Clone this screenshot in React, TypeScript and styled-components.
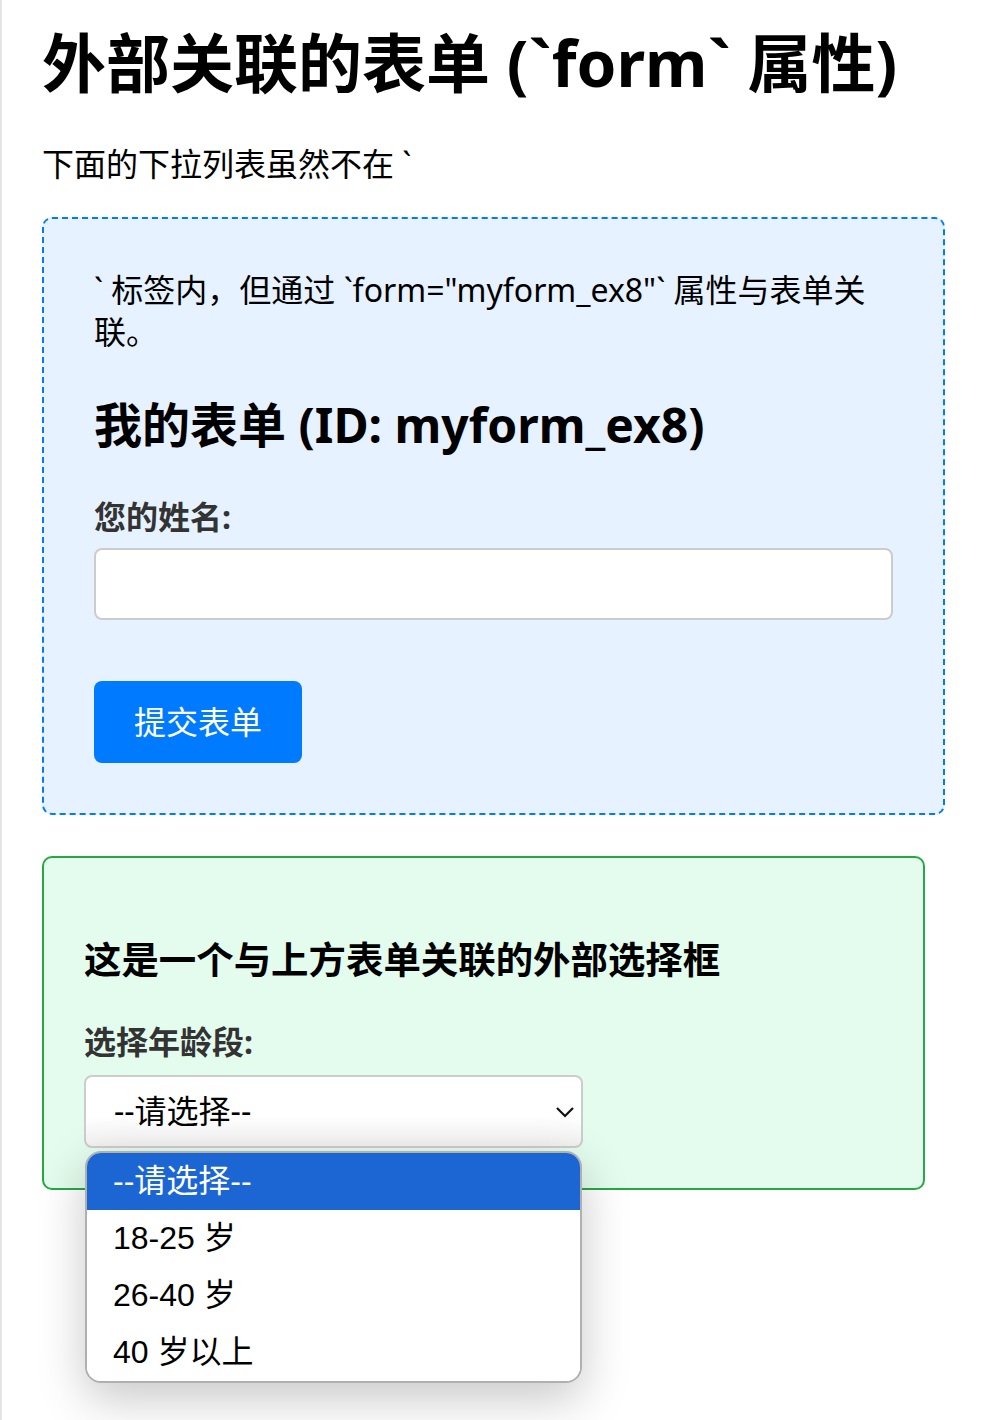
import React from 'react';
import styled, { createGlobalStyle } from 'styled-components';

const GlobalStyle = createGlobalStyle`
  html, body {
    margin: 0;
    padding: 0;
    background: #fff;
  }
  body {
    font-family: "Noto Sans", "Noto Sans CJK SC", sans-serif;
    color: #000;
    line-height: 1.32;
  }
`;

const Page = styled.div`
  min-height: 1420px;
  box-sizing: border-box;
  border-left: 2px solid #e4e4e4;
  padding: 1px 0 0 40px;
`;

const Title = styled.h1`
  font-size: 64px;
  font-weight: 700;
  line-height: 83px;
  margin: 20px 0 39px;
`;

const Intro = styled.p`
  font-size: 32px;
  line-height: 42px;
  margin: 0 0 32px;
`;

const FormBox = styled.form`
  width: 903px;
  box-sizing: border-box;
  border: 2px dashed #007bff;
  border-radius: 10px;
  background: #e6f2ff;
  padding: 50px;
  font-size: 32px;
  line-height: 42px;
`;

const FormHeading = styled.h2`
  font-size: 48px;
  line-height: 63px;
  font-weight: 700;
  margin: 40px 0;
`;

const FieldLabel = styled.label<{ $gap: number }>`
  display: block;
  font-size: 32px;
  line-height: 42px;
  font-weight: 700;
  color: #333;
  margin-bottom: ${({ $gap }) => $gap}px;
`;

const TextInput = styled.input`
  display: block;
  width: 100%;
  height: 72px;
  box-sizing: border-box;
  border: 2px solid #ccc;
  border-radius: 8px;
  background: #fff;
  padding: 0 20px;
  font-size: 32px;
  font-family: inherit;
  margin: 0 0 61px;
  outline: none;
`;

const SubmitButton = styled.button`
  display: block;
  background: #007bff;
  color: #fff;
  border: none;
  border-radius: 8px;
  padding: 20px 40px;
  font-size: 32px;
  line-height: 42px;
  font-family: inherit;
  cursor: pointer;
`;

const ExternalBox = styled.div`
  width: 883px;
  box-sizing: border-box;
  margin-top: 41px;
  border: 2px solid #28a745;
  border-radius: 10px;
  background: #e4fced;
  padding: 40px;
`;

const SubHeading = styled.h3`
  font-size: 37.44px;
  line-height: 49px;
  font-weight: 700;
  margin: 0 0 37px;
  padding-top: 37px;
`;

const SelectWrap = styled.div`
  position: relative;
  width: 499px;
`;

const SelectBox = styled.div`
  height: 73px;
  box-sizing: border-box;
  border: 2px solid #ccc;
  border-radius: 8px;
  background: linear-gradient(#fff 55%, #f1f1f1);
  padding: 0 6px 0 28px;
  display: flex;
  align-items: center;
  justify-content: space-between;
  font-size: 32px;
`;

const Chevron = styled.svg`
  width: 20px;
  height: 12px;
`;

const OptionList = styled.ul`
  position: absolute;
  top: calc(100% + 3px);
  left: 1px;
  right: 1px;
  margin: 0;
  padding: 0;
  list-style: none;
  background: #fff;
  border: 2px solid #b0b0b0;
  border-radius: 16px;
  overflow: hidden;
  box-shadow: 0 16px 48px rgba(0, 0, 0, 0.22);
  z-index: 10;
`;

const OptionItem = styled.li<{ $active?: boolean }>`
  height: 57px;
  display: flex;
  align-items: center;
  padding: 0 26px;
  font-family: "Liberation Sans", "Noto Sans CJK SC", sans-serif;
  font-size: 32px;
  background: ${({ $active }) => ($active ? '#1b66d3' : '#fff')};
  color: ${({ $active }) => ($active ? '#fff' : '#000')};
`;

const options = ['--请选择--', '18-25 岁', '26-40 岁', '40 岁以上'];

export default function App() {
  return (
    <>
      <GlobalStyle />
      <Page>
        <Title>外部关联的表单 (`form` 属性)</Title>
        <Intro>下面的下拉列表虽然不在 `</Intro>
        <FormBox id="myform_ex8" onSubmit={(e) => e.preventDefault()}>
          ` 标签内，但通过 `form="myform_ex8"` 属性与表单关联。
          <FormHeading>我的表单 (ID: myform_ex8)</FormHeading>
          <FieldLabel $gap={10} htmlFor="name">您的姓名:</FieldLabel>
          <TextInput id="name" type="text" />
          <SubmitButton type="submit">提交表单</SubmitButton>
        </FormBox>
        <ExternalBox>
          <SubHeading>这是一个与上方表单关联的外部选择框</SubHeading>
          <FieldLabel $gap={12}>选择年龄段:</FieldLabel>
          <SelectWrap>
            <SelectBox>
              <span>--请选择--</span>
              <Chevron viewBox="0 0 20 12">
                <polyline points="2,2 10,10 18,2" fill="none" stroke="#111" strokeWidth="2.2" />
              </Chevron>
            </SelectBox>
            <OptionList>
              {options.map((o, i) => (
                <OptionItem key={o} $active={i === 0}>{o}</OptionItem>
              ))}
            </OptionList>
          </SelectWrap>
        </ExternalBox>
      </Page>
    </>
  );
}
